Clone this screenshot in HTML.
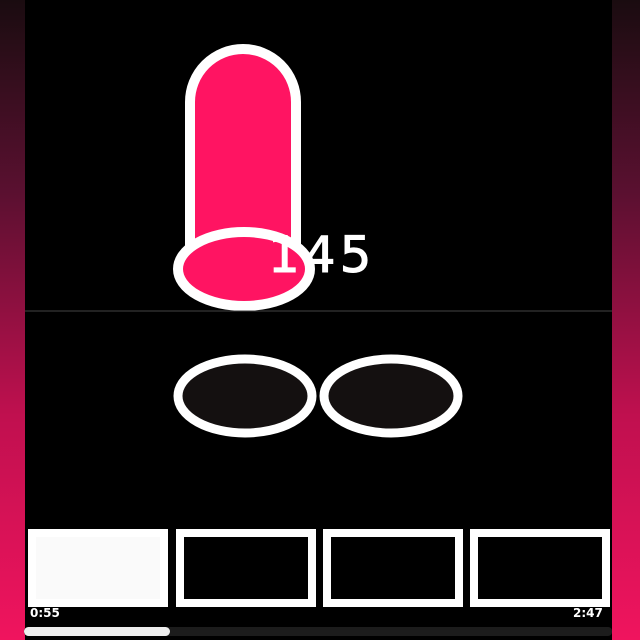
<!DOCTYPE html>
<html><head><style>
body{margin:0;width:640px;height:640px;background:#000;position:relative;overflow:hidden;font-family:"Liberation Sans",sans-serif}
.side{position:absolute;top:0;width:25px;height:640px;background:linear-gradient(#1a0c10,#5a1030 30%,#c0104f 65%,#f0145e)}
.box{position:absolute;top:529px;width:124px;height:62px;border:8px solid #fff;background:#000}
.t{position:absolute;top:606px;color:#fff;font-weight:bold;font-size:12px;font-family:"DejaVu Sans",sans-serif}
</style></head><body>
<div class="side" style="left:0"></div>
<div class="side" style="left:612px;width:28px"></div>
<svg width="640" height="640" style="position:absolute;left:0;top:0">
<path d="M190 268 V102 A53 53 0 0 1 296 102 V268 Z" fill="#ff1462" stroke="#fff" stroke-width="10"/>
<ellipse cx="244" cy="269" rx="66" ry="37" fill="#ff1462" stroke="#fff" stroke-width="10"/>
<text x="268" y="272" fill="#fff" font-size="50" font-family="DejaVu Sans" letter-spacing="4" stroke="#fff" stroke-width="1">145</text>
<line x1="25" y1="311" x2="612" y2="311" stroke="#444" stroke-width="1"/>
<ellipse cx="245" cy="396" rx="67" ry="37" fill="#141010" stroke="#fff" stroke-width="9"/>
<ellipse cx="391" cy="396" rx="67" ry="37" fill="#141010" stroke="#fff" stroke-width="9"/>
<rect x="24" y="627" width="588" height="9" rx="4" fill="#1c1c1c"/>
<rect x="24" y="627" width="146" height="9" rx="4.5" fill="#eee"/>
</svg>
<div class="box" style="left:28px;background:#fafafa"></div>
<div class="box" style="left:176px"></div>
<div class="box" style="left:323px"></div>
<div class="box" style="left:470px"></div>
<div class="t" style="left:30px">0:55</div>
<div class="t" style="left:573px">2:47</div>
</body></html>
